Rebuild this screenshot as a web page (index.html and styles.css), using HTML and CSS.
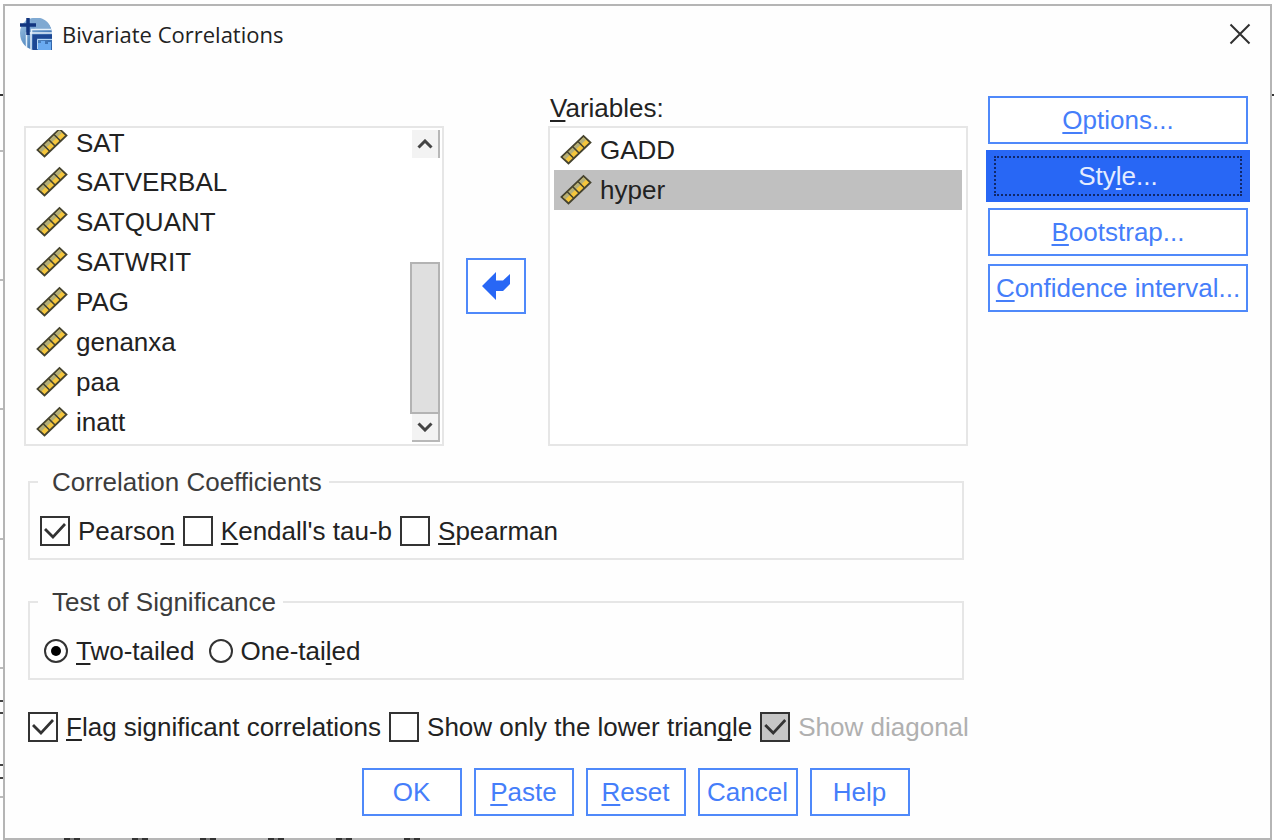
FILE: index.html
```html
<!DOCTYPE html>
<html lang="en">
<head>
<meta charset="utf-8">
<title>Bivariate Correlations</title>
<link rel="stylesheet" href="styles.css">
</head>
<body>
<svg class="sprite" aria-hidden="true">
  <symbol id="ruler" viewBox="0 0 32 32">
    <path d="M1.500 23 23.500 2 30.500 8.500 8.500 29.500Z" fill="#f5c63c" stroke="#45432f" stroke-width="1.800"/>
    <path d="M3 23 23.500 3.300 26 5.700 5.500 25.300Z" fill="#b3ae78"/>
    <path d="M7 17.500l6.500 6.500M12.500 12.500l6.500 6.500M18 7.500l6.500 6.500" stroke="#45432f" stroke-width="1.600"/>
  </symbol>
</svg>
<div class="backdrop" aria-hidden="true">
  <i class="tick tick-dark"></i><i class="tick t1"></i><i class="tick t2"></i><i class="tick t3"></i><i class="tick t4"></i><i class="tick t5"></i>
  <i class="tick tick-text t6"></i><i class="tick tick-text t7"></i><i class="tick tick-text t8"></i><i class="tick tick-text t9"></i><i class="tick t10"></i>
</div>
<form class="dialog">
  <header class="titlebar">
    <svg class="logo" viewBox="0 0 32 32" aria-hidden="true">
      <defs>
        <linearGradient id="sky" x1="0" y1="0" x2="1" y2="1"><stop offset="0" stop-color="#a9cbe8"/><stop offset=".5" stop-color="#5b8fc4"/><stop offset="1" stop-color="#2a5fa8"/></linearGradient>
      </defs>
      <path d="M15 0C25 0 32 7 32 16V32H16C7 32 0 25 0 15 0 6 6 0 15 0Z" fill="url(#sky)"/>
      <path d="M10 1c9-4 19 1 21 10H15Z" fill="#7fa9d2"/>
      <path d="M6.500 29V15h5v-3.500h20" fill="none" stroke="#e4f0fa" stroke-width="1.500"/>
      <path d="M11 31V15h21" fill="none" stroke="#e4f0fa" stroke-width="1.500"/>
      <path d="M12.500 16.500h19.500v4H17v11.500h-4.500z" fill="#1d4894"/>
      <path d="M17.500 31V21.500h14.500" fill="none" stroke="#b8d8f5" stroke-width="1"/>
      <path d="M18 32v-7h3v-2h4v3h3v-2h3v8z" fill="#6aaaf0"/>
      <path d="M8 0v17M0 7h16" stroke="#12357f" stroke-width="3.500"/>
    </svg>
    <h1>Bivariate Correlations</h1>
    <button type="button" class="close" aria-label="Close"><svg viewBox="0 0 22 22"><path d="M1.500 1.500l19 19M20.500 1.500l-19 19" stroke="#303030" stroke-width="2"/></svg></button>
  </header>

  <main class="content">
    <div class="settings">
      <section class="pickers">
        <div class="listbox source">
          <ul role="listbox" aria-label="Available variables">
            <li role="option"><svg><use href="#ruler"/></svg>SAT</li>
            <li role="option"><svg><use href="#ruler"/></svg>SATVERBAL</li>
            <li role="option"><svg><use href="#ruler"/></svg>SATQUANT</li>
            <li role="option"><svg><use href="#ruler"/></svg>SATWRIT</li>
            <li role="option"><svg><use href="#ruler"/></svg>PAG</li>
            <li role="option"><svg><use href="#ruler"/></svg>genanxa</li>
            <li role="option"><svg><use href="#ruler"/></svg>paa</li>
            <li role="option"><svg><use href="#ruler"/></svg>inatt</li>
          </ul>
          <div class="scrollbar">
            <button type="button" class="scroll-up" aria-label="Scroll up"><svg viewBox="0 0 16 10"><path d="M1.500 8.500 8 2l6.500 6.500" fill="none" stroke="#444" stroke-width="3"/></svg></button>
            <span class="thumb"></span>
            <button type="button" class="scroll-down" aria-label="Scroll down"><svg viewBox="0 0 16 10"><path d="M1.500 1.500 8 8l6.500-6.500" fill="none" stroke="#444" stroke-width="3"/></svg></button>
          </div>
        </div>
        <button type="button" class="move" aria-label="Move variable back"><svg viewBox="0 0 28 28"><path d="M0 14 14 0V8.500H21L28 2V12L21 19H14V28Z" fill="#2867f5"/></svg></button>
        <div class="target">
          <div class="caption" id="vars"><u>V</u>ariables:</div>
          <div class="listbox">
            <ul role="listbox" aria-labelledby="vars">
              <li role="option"><svg><use href="#ruler"/></svg>GADD</li>
              <li role="option" class="selected" aria-selected="true"><svg><use href="#ruler"/></svg>hyper</li>
            </ul>
          </div>
        </div>
      </section>

      <fieldset>
        <legend>Correlation Coefficients</legend>
        <div class="options">
          <label><input type="checkbox" checked><span>Pearso<u>n</u></span></label>
          <label><input type="checkbox"><span><u>K</u>endall's tau-b</span></label>
          <label><input type="checkbox"><span><u>S</u>pearman</span></label>
        </div>
      </fieldset>

      <fieldset>
        <legend>Test of Significance</legend>
        <div class="options radios">
          <label><input type="radio" name="tails" checked><span><u>T</u>wo-tailed</span></label>
          <label><input type="radio" name="tails"><span>One-tai<u>l</u>ed</span></label>
        </div>
      </fieldset>

      <div class="options flags">
        <label><input type="checkbox" checked><span><u>F</u>lag significant correlations</span></label>
        <label><input type="checkbox"><span>Show only the lower trian<u>g</u>le</span></label>
        <label class="disabled"><input type="checkbox" checked disabled><span>Show diagonal</span></label>
      </div>
    </div>

    <nav class="side">
      <button type="button"><span><u>O</u>ptions...</span></button>
      <button type="button" class="focused"><span>Sty<u>l</u>e...</span></button>
      <button type="button"><span><u>B</u>ootstrap...</span></button>
      <button type="button"><span><u>C</u>onfidence interval...</span></button>
    </nav>
  </main>

  <footer class="actions">
    <button type="button">OK</button>
    <button type="button"><span><u>P</u>aste</span></button>
    <button type="button"><span><u>R</u>eset</span></button>
    <button type="button">Cancel</button>
    <button type="button">Help</button>
  </footer>
</form>
<div class="edge" aria-hidden="true"><i></i><i></i><i></i><i></i><i></i><i></i></div>
</body>
</html>
```

FILE: styles.css
```css
* { box-sizing: border-box; }

body {
  position: relative;
  margin: 0;
  padding: 4px 2px 0 3px;
  min-height: 100vh;
  display: flex;
  background: #fff;
  color: #222;
  font: 26px/28px "Liberation Sans", Arial, sans-serif;
}

button, input { font: inherit; color: inherit; margin: 0; }
button { padding: 0; }
svg { display: block; }
.sprite { position: absolute; width: 0; height: 0; }

u {
  text-decoration: underline;
  text-decoration-thickness: 2px;
  text-underline-offset: 3px;
  text-decoration-skip-ink: none;
}

/* Window behind the dialog, visible only at its edges */
.backdrop { position: absolute; inset: 0; z-index: 0; }
.tick { position: absolute; left: 0; width: 3px; height: 2px; background: #bbb; }
.tick-dark { top: 94px; width: 100%; background: #333; }
.tick-text { background: #444; }
.t1 { top: 150px; }
.t2 { top: 279px; }
.t3 { top: 408px; }
.t4 { top: 538px; }
.t5 { top: 667px; }
.t6 { top: 700px; }
.t7 { top: 712px; }
.t8 { top: 764px; }
.t9 { top: 777px; }
.t10 { top: 796px; }
.edge {
  position: absolute;
  left: 64px;
  bottom: 0;
  z-index: 2;
  display: flex;
  gap: 52px;
}
.edge i { width: 16px; height: 2px; border: 0 solid #333; border-width: 0 6px; background: #777; }

.dialog {
  position: relative;
  z-index: 1;
  flex: 1;
  display: flex;
  flex-direction: column;
  background: #fefefe;
  border: 2px solid #b5b5b5;
}

.titlebar {
  display: flex;
  align-items: center;
  gap: 10px;
  padding: 12px 19px 12px 15px;
}
.logo { width: 32px; height: 32px; }
.titlebar h1 {
  flex: 1;
  margin: 0;
  font: 22px/32px "Open Sans", "Noto Sans", sans-serif;
}
.close { border: 0; background: none; }
.close svg { width: 22px; height: 22px; }

.content {
  display: grid;
  grid-template-columns: minmax(0, 1fr) 260px;
  gap: 20px;
  padding: 32px 22px 0 19px;
}

.pickers {
  display: grid;
  grid-template-columns: 1fr 60px 1fr;
  gap: 22px;
  align-items: end;
  margin-bottom: 22px;
}
.caption { padding: 0 2px; margin-bottom: 4px; }
.listbox {
  display: flex;
  height: 320px;
  padding: 2px;
  border: 2px solid #e6e6e6;
  background: #fff;
}
.listbox ul {
  flex: 1;
  display: flex;
  flex-direction: column;
  overflow: hidden;
  margin: 0;
  padding: 0 2px;
  list-style: none;
}
.listbox li {
  flex: none;
  display: flex;
  align-items: center;
  gap: 8px;
  height: 40px;
}
.source ul { padding-left: 8px; }
.source li:first-child { height: 32px; padding-bottom: 6px; line-height: 24px; }
.target li { padding-left: 6px; }
.listbox li svg { flex: none; width: 32px; height: 32px; }
.selected { background: #c0c0c0; }

.scrollbar {
  display: flex;
  flex-direction: column;
  width: 30px;
}
.scrollbar button {
  display: grid;
  place-items: center;
  height: 28px;
  margin-left: 2px;
  border: 0 solid #b8b8b8;
  border-right-width: 2px;
  background: #f3f3f3;
}
.scrollbar .scroll-down { border-bottom-width: 2px; }
.scrollbar svg { width: 16px; height: 10px; }
.thumb {
  height: 152px;
  margin-top: auto;
  border: 2px solid #b3b3b3;
  background: #dfdfdf;
}

.move, .side button, .actions button {
  border: 2px solid #4f89fa;
  background: #fff;
  color: #457efa;
}
.move {
  display: grid;
  place-items: center;
  height: 56px;
  margin-bottom: 132px;
}
.move svg { width: 28px; height: 28px; }

fieldset {
  min-width: 0;
  margin: 0 4px 28px;
  padding: 20px 8px 12px;
  border: 2px solid #e6e6e6;
}
legend { padding: 0 7px 0 14px; color: #3c3c3c; }

.options {
  display: flex;
  align-items: center;
  gap: 8px;
  min-height: 30px;
  padding-left: 2px;
  white-space: nowrap;
}
.options label { display: flex; align-items: center; gap: 8px; }
.options.radios { gap: 14px; padding-left: 6px; }
.options.flags { margin-top: 32px; padding-left: 4px; }

input[type="checkbox"] {
  appearance: none;
  display: grid;
  place-items: center;
  width: 30px;
  height: 30px;
  border: 2px solid #333;
  background: #fff;
}
input[type="checkbox"]:checked::before {
  content: "";
  width: 22px;
  height: 16px;
  background: #333;
  clip-path: polygon(0 7px, 2px 5px, 9px 12px, 20px 0, 22px 2px, 9px 16px);
}
input[type="checkbox"]:disabled { background: #c6c6c6; }
.disabled { color: #b0b0b0; }

input[type="radio"] {
  appearance: none;
  display: grid;
  place-items: center;
  width: 24px;
  height: 24px;
  border: 2px solid #333;
  border-radius: 50%;
  background: #fff;
}
input[type="radio"]:checked::before {
  content: "";
  width: 10px;
  height: 10px;
  border-radius: 50%;
  background: #000;
}

.side {
  display: flex;
  flex-direction: column;
  gap: 8px;
  padding-top: 2px;
}
.side button { height: 48px; white-space: nowrap; }
.side .focused {
  display: flex;
  padding: 2px 4px;
  border-color: #2867f5;
  background: #2867f5;
  box-shadow: 0 0 0 2px #2867f5;
  color: #e4ecff;
}
.focused > span {
  flex: 1;
  align-self: stretch;
  padding-top: 4px;
  border: 2px dotted #10286a;
}

.actions {
  display: flex;
  justify-content: center;
  gap: 12px;
  padding: 26px 4px 22px 0;
}
.actions button { width: 100px; height: 48px; }
```
